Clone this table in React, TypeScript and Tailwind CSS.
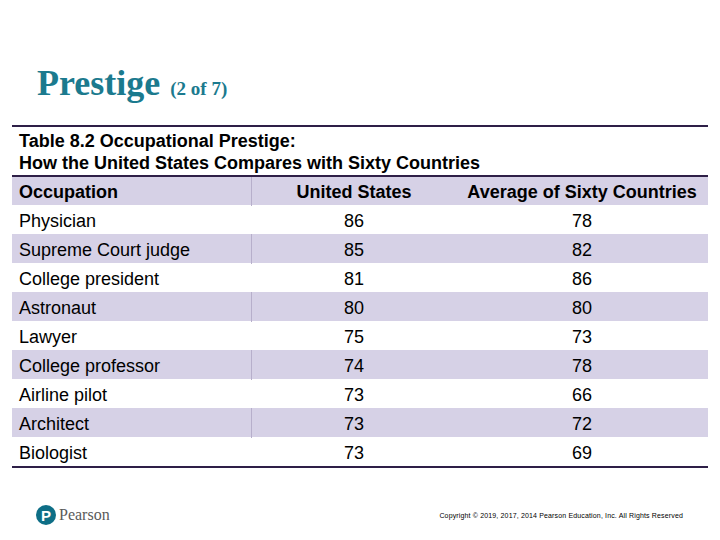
const ROWS: [string, number, number][] = [
  ['Physician', 86, 78],
  ['Supreme Court judge', 85, 82],
  ['College president', 81, 86],
  ['Astronaut', 80, 80],
  ['Lawyer', 75, 73],
  ['College professor', 74, 78],
  ['Airline pilot', 73, 66],
  ['Architect', 73, 72],
  ['Biologist', 73, 69],
];

export default function App() {
  return (
    <div className="w-[720px] h-[540px] bg-white relative font-['Liberation_Sans',Arial,sans-serif] text-black">
      {/* Title */}
      <div className="flex items-baseline gap-[10px] pl-[37px] pt-[63px] h-[125px] font-['Liberation_Serif','Times_New_Roman',serif] font-bold text-[#1b7a8e]">
        <span className="text-[36px] leading-[40px]">Prestige</span>
        <span className="text-[19px]">(2 of 7)</span>
      </div>

      {/* Table */}
      <div className="mx-[12px] w-[696px] border-t-2 border-b-2 border-[#2e1f47]">
        <div className="px-[7px] pt-[3px] pb-[1px] text-[18px] leading-[22px] font-bold">
          <div>Table 8.2 Occupational Prestige:</div>
          <div>How the United States Compares with Sixty Countries</div>
        </div>
        <div className="border-t-2 border-[#2e1f47]">
          <div className="grid grid-cols-[240px_204px_252px] h-[28px] items-center bg-[#d6d1e6] text-[18px] font-bold">
            <div className="pl-[7px] h-full flex items-center border-r border-[#b7afcb] pt-[2px]">Occupation</div>
            <div className="text-center pt-[2px]">United States</div>
            <div className="text-center pt-[2px]">Average of Sixty Countries</div>
          </div>
          {ROWS.map(([name, us, avg], i) => {
            const shaded = i % 2 === 1;
            return (
              <div
                key={name}
                className={`grid grid-cols-[240px_204px_252px] h-[29px] items-center text-[18px] ${shaded ? 'bg-[#d6d1e6]' : 'bg-white'}`}
              >
                <div className={`pl-[7px] h-full flex items-center pt-[3px] border-r ${shaded ? 'border-[#b7afcb]' : 'border-transparent'}`}>
                  {name}
                </div>
                <div className="text-center pt-[3px]">{us}</div>
                <div className="text-center pt-[3px]">{avg}</div>
              </div>
            );
          })}
        </div>
      </div>

      {/* Footer */}
      <div className="flex items-center justify-between pl-[36px] pr-[37px] pt-[35px]">
        <div className="flex items-center gap-[3px]">
          <div className="w-[20px] h-[20px] rounded-full bg-[#0e6e86] flex items-center justify-center text-white font-bold text-[15px] leading-none font-['Liberation_Sans',Arial,sans-serif]">
            P
          </div>
          <span className="font-['Liberation_Serif','Times_New_Roman',serif] text-[16px] text-[#5a5a5a]">Pearson</span>
        </div>
        <div className="text-[7px] text-black tracking-[0.15px] pt-[3px]">
          Copyright © 2019, 2017, 2014 Pearson Education, Inc. All Rights Reserved
        </div>
      </div>
    </div>
  );
}
